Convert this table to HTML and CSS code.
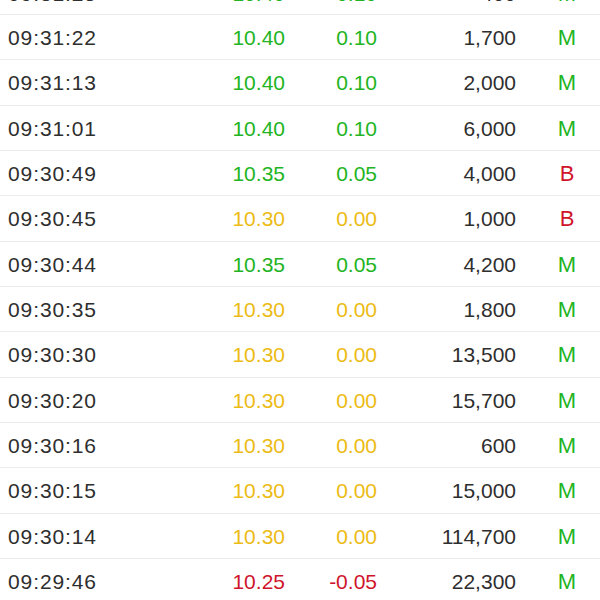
FILE: index.html
```html
<!DOCTYPE html>
<html>
<head>
<meta charset="utf-8">
<link rel="stylesheet" href="styles.css">
</head>
<body>
<div class="list">
  <div class="row row-partial"><span class="time">09:31:25</span><span class="num up">10.40</span><span class="num up">0.10</span><span class="vol">400</span><span class="side up">M</span></div>
  <div class="row"><span class="time">09:31:22</span><span class="num up">10.40</span><span class="num up">0.10</span><span class="vol">1,700</span><span class="side up">M</span></div>
  <div class="row"><span class="time">09:31:13</span><span class="num up">10.40</span><span class="num up">0.10</span><span class="vol">2,000</span><span class="side up">M</span></div>
  <div class="row"><span class="time">09:31:01</span><span class="num up">10.40</span><span class="num up">0.10</span><span class="vol">6,000</span><span class="side up">M</span></div>
  <div class="row"><span class="time">09:30:49</span><span class="num up">10.35</span><span class="num up">0.05</span><span class="vol">4,000</span><span class="side down">B</span></div>
  <div class="row"><span class="time">09:30:45</span><span class="num flat">10.30</span><span class="num flat">0.00</span><span class="vol">1,000</span><span class="side down">B</span></div>
  <div class="row"><span class="time">09:30:44</span><span class="num up">10.35</span><span class="num up">0.05</span><span class="vol">4,200</span><span class="side up">M</span></div>
  <div class="row"><span class="time">09:30:35</span><span class="num flat">10.30</span><span class="num flat">0.00</span><span class="vol">1,800</span><span class="side up">M</span></div>
  <div class="row"><span class="time">09:30:30</span><span class="num flat">10.30</span><span class="num flat">0.00</span><span class="vol">13,500</span><span class="side up">M</span></div>
  <div class="row"><span class="time">09:30:20</span><span class="num flat">10.30</span><span class="num flat">0.00</span><span class="vol">15,700</span><span class="side up">M</span></div>
  <div class="row"><span class="time">09:30:16</span><span class="num flat">10.30</span><span class="num flat">0.00</span><span class="vol">600</span><span class="side up">M</span></div>
  <div class="row"><span class="time">09:30:15</span><span class="num flat">10.30</span><span class="num flat">0.00</span><span class="vol">15,000</span><span class="side up">M</span></div>
  <div class="row"><span class="time">09:30:14</span><span class="num flat">10.30</span><span class="num flat">0.00</span><span class="vol">114,700</span><span class="side up">M</span></div>
  <div class="row"><span class="time">09:29:46</span><span class="num down">10.25</span><span class="num down">-0.05</span><span class="vol">22,300</span><span class="side up">M</span></div>
</div>
</body>
</html>
```
FILE: styles.css
```css
html, body {
  margin: 0;
  padding: 0;
  background: #ffffff;
  overflow: hidden;
}
body {
  font-family: "Liberation Sans", Arial, sans-serif;
  font-size: 21px;
  color: #2e2e2e;
}
.list {
  margin-top: -30.333px;
}
.row {
  display: grid;
  grid-template-columns: 1fr 80px 92px 139px 84px;
  align-items: center;
  box-sizing: border-box;
  height: 45.333px;
  padding: 2px 0 0 8px;
  border-bottom: 1px solid #ececec;
  line-height: 24px;
}
.row-partial {
  padding-top: 4px;
}
.time {
  letter-spacing: 0.9px;
}
.num, .vol {
  text-align: right;
}
.side {
  text-align: center;
  padding-left: 18px;
  font-size: 22px;
}
.up { color: #22b422; }
.down { color: #d0142c; }
.flat { color: #ecbb14; }
```
